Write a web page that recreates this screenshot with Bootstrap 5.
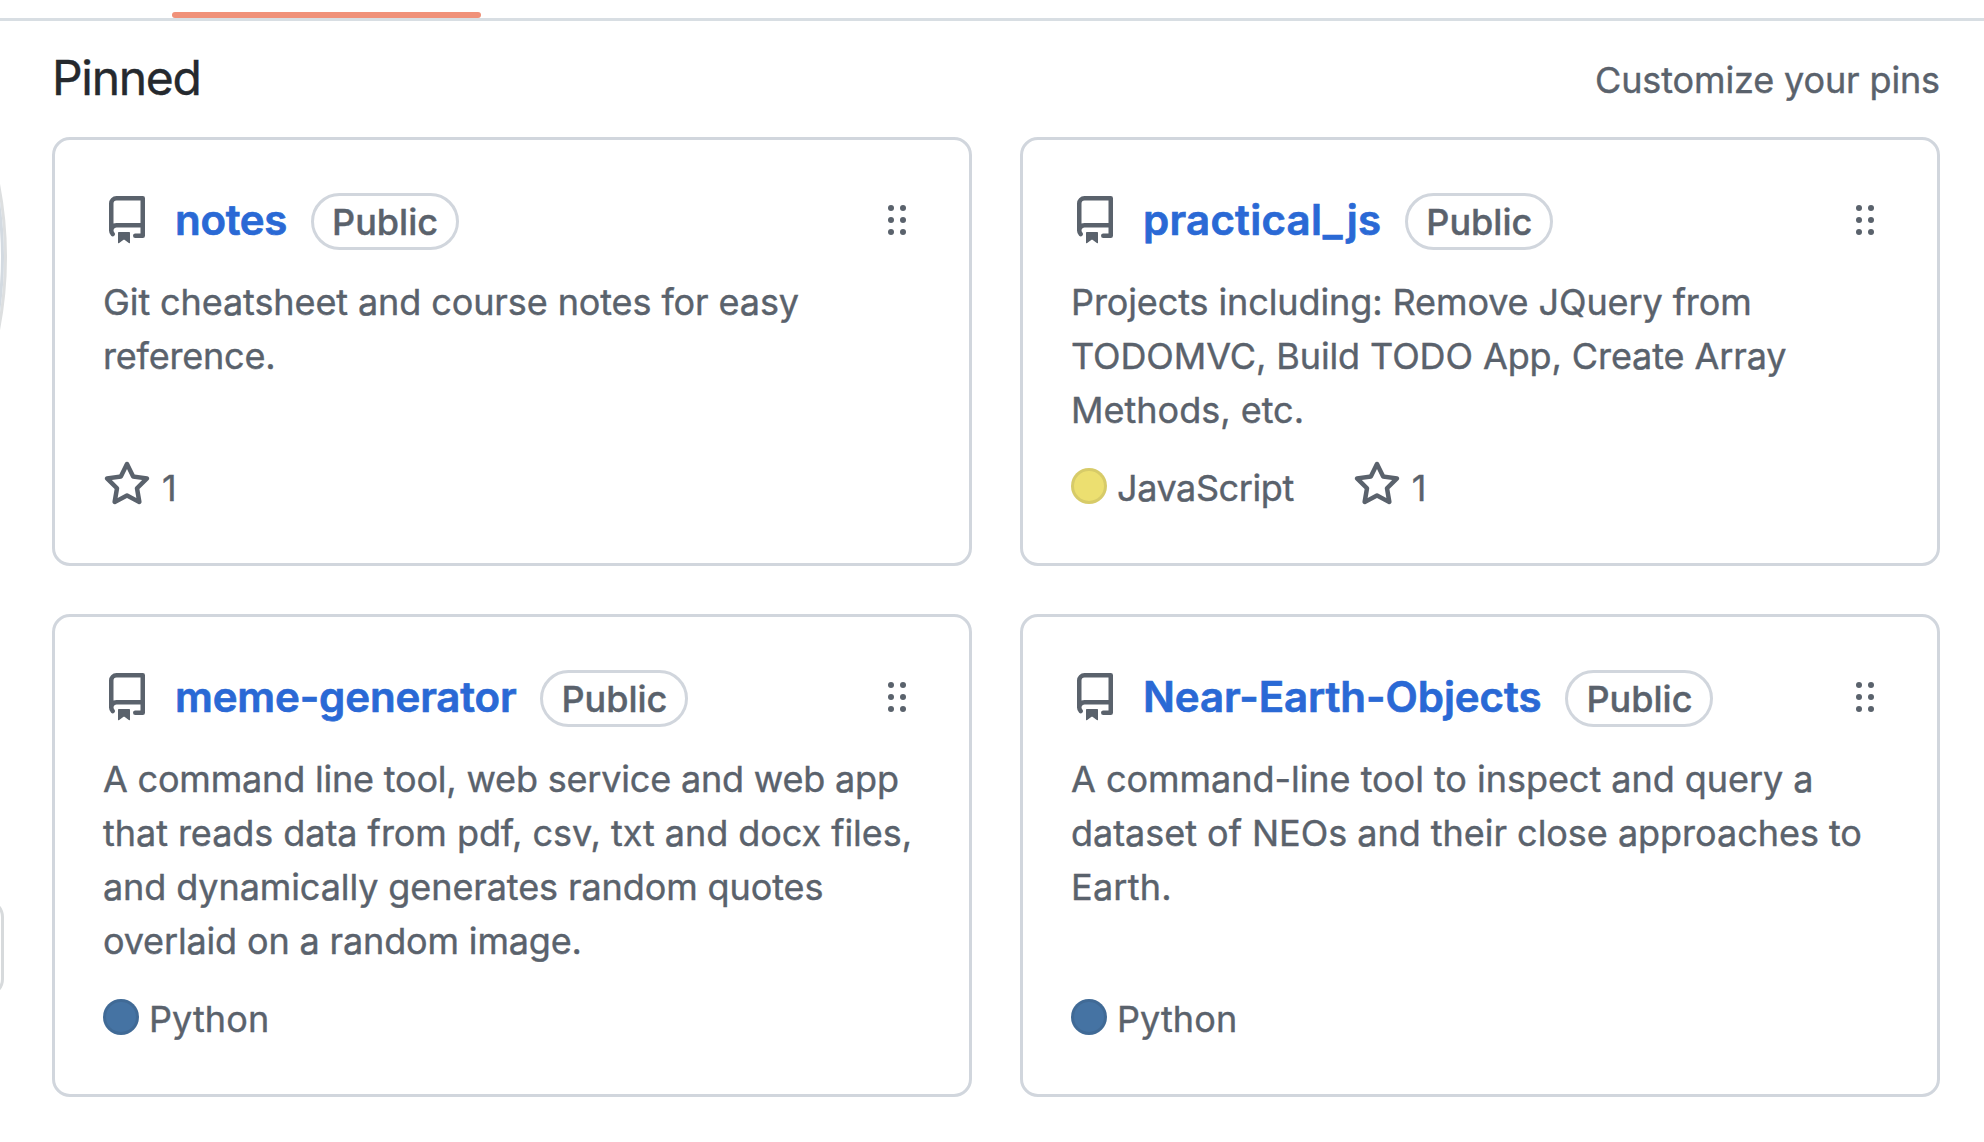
<!DOCTYPE html>
<html lang="en">
<head>
<meta charset="utf-8">
<meta name="viewport" content="width=device-width, initial-scale=1">
<title>Pinned repositories</title>
<link href="https://cdn.jsdelivr.net/npm/bootstrap@5.3.0/dist/css/bootstrap.min.css" rel="stylesheet">
<style>
  body { font-family: Inter, "Liberation Sans", sans-serif; font-size: 36px; line-height: 54px; color: #5a626c; background: #fff; overflow: hidden; -webkit-text-stroke: .4px currentColor; }
  a { text-decoration: none; }
  svg { -webkit-text-stroke: 0; }
  .tab-strip { height: 21px; border-bottom: 3px solid #d8dee3; padding: 12px 0 0 172px; }
  .tab-active { width: 309px; height: 6px; border-radius: 3px; background: #f09179; }
  .profile-edge { width: 52px; height: 1121px; }
  .pins { width: 1888px; }
  .pins-head { height: 116px; }
  .pins-title { font-size: 48px; line-height: 72px; font-weight: 400; letter-spacing: -1.3px; color: #25292e; margin: 21px 0 0; }
  .pins-customize { color: #5a626c; margin-top: 32px; letter-spacing: -.13px; }
  .pin-grid { display: grid; grid-template-columns: 920px 920px; gap: 48px; }
  .pin { border: 3px solid #d1d6dd; border-radius: 18px; padding: 48px; color: inherit; background: #fff; }
  .pin-head { height: 63px; margin-bottom: 24px; }
  .icon { width: 48px; height: 48px; fill: currentColor; flex: none; }
  .pin-head .icon { margin-top: 8px; }
  .grip { width: 18px; height: 30px; fill: currentColor; margin: 17px 15px 0 auto; flex: none; }
  .repo { font-size: 42px; line-height: 63px; font-weight: 600; color: #2a69d5; margin: 0 24px; white-space: nowrap; -webkit-text-stroke: .7px #2a69d5; }
  .visibility { font-weight: 500; line-height: 53px; height: 57px; border: 3px solid #d1d6dd; border-radius: 29px; padding: 0 18px; margin-top: 5px; }
  .desc { margin-bottom: 24px; }
  .desc span { display: block; white-space: nowrap; }
  .meta { height: 54px; }
  .dot { width: 36px; height: 36px; border-radius: 50%; border: 3px solid rgba(27,31,36,.1); margin-top: 7px; }
  .dot-js { background-color: #ecdf70; }
  .dot-py { background-color: #4573a3; }
  .lang { margin-left: 10px; }
  .lang-js { letter-spacing: -.4px; margin-right: 59px; }
  .lang-py { letter-spacing: .1px; }
  .stars { margin-left: 11px; }
  .ls-n { letter-spacing: -.3px; }
  .ls-19 { letter-spacing: -.19px; }
  .ls-15 { letter-spacing: -.15px; }
  .ls-12 { letter-spacing: -.1px; }
  .ls-06 { letter-spacing: -.05px; }
  .ls-03 { letter-spacing: -.03px; }
  .ls-p26 { letter-spacing: .26px; }
</style>
<script src="https://cdn.jsdelivr.net/npm/bootstrap@5.3.0/dist/js/bootstrap.bundle.min.js"></script>
</head>
<body>
<svg class="d-none" xmlns="http://www.w3.org/2000/svg">
  <symbol id="i-repo" viewBox="0 0 16 16"><path fill-rule="evenodd" d="M2 2.5A2.5 2.5 0 014.5 0h8.75a.75.75 0 01.75.75v12.5a.75.75 0 01-.75.75h-2.5a.75.75 0 110-1.5h1.75v-2h-8a1 1 0 00-.714 1.7.75.75 0 01-1.072 1.05A2.495 2.495 0 012 11.5v-9zm10.5-1V9h-8c-.356 0-.694.074-1 .208V2.5a1 1 0 011-1h8zM5 12.25v3.25a.25.25 0 00.4.2l1.45-1.087a.25.25 0 01.3 0L8.6 15.7a.25.25 0 00.4-.2v-3.25a.25.25 0 00-.25-.25h-3.5a.25.25 0 00-.25.25z"/></symbol>
  <symbol id="i-star" viewBox="0 0 16 16"><path fill-rule="evenodd" d="M8 .25a.75.75 0 01.673.418l1.882 3.815 4.21.612a.75.75 0 01.416 1.279l-3.046 2.97.719 4.192a.75.75 0 01-1.088.791L8 12.347l-3.766 1.98a.75.75 0 01-1.088-.79l.72-4.194L.818 6.374a.75.75 0 01.416-1.28l4.21-.611L7.327.668A.75.75 0 018 .25zm0 2.445L6.615 5.5a.75.75 0 01-.564.41l-3.097.45 2.24 2.184a.75.75 0 01.216.664l-.528 3.084 2.769-1.456a.75.75 0 01.698 0l2.77 1.456-.53-3.084a.75.75 0 01.216-.664l2.24-2.183-3.096-.45a.75.75 0 01-.564-.41L8 2.694v.001z"/></symbol>
  <symbol id="i-grip" viewBox="0 0 18 30"><circle cx="3" cy="3" r="3"/><circle cx="15" cy="3" r="3"/><circle cx="3" cy="15" r="3"/><circle cx="15" cy="15" r="3"/><circle cx="3" cy="27" r="3"/><circle cx="15" cy="27" r="3"/></symbol>
</svg>

<nav class="tab-strip"><div class="tab-active"></div></nav>

<div class="d-flex">
  <!-- right edges of the avatar and of the sidebar button -->
  <svg class="profile-edge d-block flex-shrink-0" viewBox="0 21 52 1121" fill="none" stroke-width="3">
    <circle cx="-377" cy="257" r="382.5" stroke="#dddfe0"/>
    <circle cx="-377" cy="257" r="379.5" stroke="#d3dae1"/>
    <rect x="-297.5" y="900.5" width="300" height="95" rx="16.5" stroke="#d7dadc"/>
  </svg>

  <main class="pins flex-shrink-0">
    <header class="pins-head d-flex justify-content-between align-items-start">
      <h2 class="pins-title">Pinned</h2>
      <a href="#" class="pins-customize">Customize your pins</a>
    </header>

    <div class="pin-grid">
      <article class="card pin">
        <div class="pin-head d-flex align-items-start">
          <svg class="icon"><use href="#i-repo"/></svg>
          <a href="#" class="repo ls-n">notes</a>
          <span class="visibility">Public</span>
          <svg class="grip"><use href="#i-grip"/></svg>
        </div>
        <p class="desc"><span class="ls-12">Git cheatsheet and course notes for easy</span><span class="ls-19">reference.</span></p>
        <div class="meta d-flex align-items-start mt-auto">
          <svg class="icon"><use href="#i-star"/></svg><span class="stars">1</span>
        </div>
      </article>

      <article class="card pin">
        <div class="pin-head d-flex align-items-start">
          <svg class="icon"><use href="#i-repo"/></svg>
          <a href="#" class="repo ls-p26">practical_js</a>
          <span class="visibility">Public</span>
          <svg class="grip"><use href="#i-grip"/></svg>
        </div>
        <p class="desc"><span class="ls-12">Projects including: Remove JQuery from</span><span class="ls-12">TODOMVC, Build TODO App, Create Array</span><span>Methods, etc.</span></p>
        <div class="meta d-flex align-items-start mt-auto">
          <span class="dot dot-js"></span><span class="lang lang-js">JavaScript</span>
          <svg class="icon"><use href="#i-star"/></svg><span class="stars">1</span>
        </div>
      </article>

      <article class="card pin">
        <div class="pin-head d-flex align-items-start">
          <svg class="icon"><use href="#i-repo"/></svg>
          <a href="#" class="repo ls-15">meme-generator</a>
          <span class="visibility">Public</span>
          <svg class="grip"><use href="#i-grip"/></svg>
        </div>
        <p class="desc"><span class="ls-19">A command line tool, web service and web app</span><span class="ls-06">that reads data from pdf, csv, txt and docx files,</span><span class="ls-12">and dynamically generates random quotes</span><span class="ls-15">overlaid on a random image.</span></p>
        <div class="meta d-flex align-items-start mt-auto">
          <span class="dot dot-py"></span><span class="lang lang-py">Python</span>
        </div>
      </article>

      <article class="card pin">
        <div class="pin-head d-flex align-items-start">
          <svg class="icon"><use href="#i-repo"/></svg>
          <a href="#" class="repo ls-06">Near-Earth-Objects</a>
          <span class="visibility">Public</span>
          <svg class="grip"><use href="#i-grip"/></svg>
        </div>
        <p class="desc"><span class="ls-03">A command-line tool to inspect and query a</span><span class="ls-03">dataset of NEOs and their close approaches to</span><span class="ls-p26">Earth.</span></p>
        <div class="meta d-flex align-items-start mt-auto">
          <span class="dot dot-py"></span><span class="lang lang-py">Python</span>
        </div>
      </article>
    </div>
  </main>
</div>
</body>
</html>
